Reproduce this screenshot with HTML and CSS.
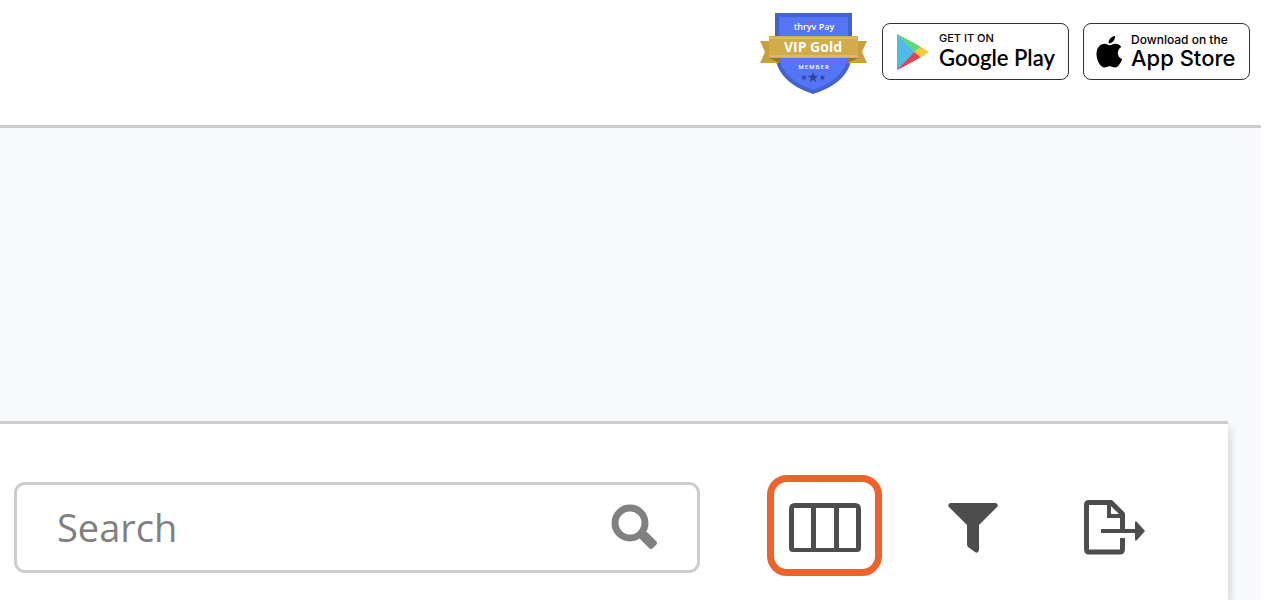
FILE: index.html
```
<!DOCTYPE html>
<html lang="en">
<head>
	<meta charset="utf-8">
	<meta name="viewport" content="width=device-width, initial-scale=1">
	<title>Clients</title>
	<link rel="stylesheet" href="styles.css">
</head>
<body>
	<header class="header">
		<svg class="vip" viewBox="0 0 107 83" role="img" aria-label="thryv Pay VIP Gold Member">
			<path fill="#4663cc" d="M15 1h77v40c0 20-16 34-39 41C31 75 15 61 15 41z"/>
			<path fill="#5475f8" d="M19 5h69v36c0 17-14 30-35 37C33 71 19 58 19 41z"/>
			<path fill="#c8a03c" d="M0 29h20v22H0l5-11zM107 29H87v22h20l-5-11z"/>
			<path fill="#94752a" d="M9 46h11v5zM98 46H87v5z"/>
			<path fill="#d2ab4c" d="M9 24h89v22H9z"/>
			<path stroke="#e5c983" d="M9 26h89M9 44h89"/>
			<path fill="none" stroke="#e0525e" d="M45 12q5-3 9 0"/>
			<text class="vip-brand" x="54" y="18">thryv Pay</text>
			<text class="vip-level" x="53" y="40">VIP Gold</text>
			<text class="vip-member" x="54" y="57">MEMBER</text>
			<path fill="#34439a" d="M53 60l1.400 3.600 3.800.200-3 2.400 1 3.800-3.200-2.100-3.200 2.100 1-3.800-3-2.400 3.800-.2zM44 62.500l.8 2 2.200.1-1.700 1.400.6 2.100-1.900-1.200-1.900 1.200.6-2.100-1.700-1.400 2.200-.1zM62.500 62.500l.8 2 2.200.1-1.700 1.400.6 2.100-1.900-1.200-1.900 1.200.6-2.100-1.700-1.400 2.200-.1z"/>
		</svg>
		<a class="store google" href="#">
			<svg width="33" height="36" viewBox="0 0 33 36" aria-hidden="true">
				<path fill="#4fbce8" d="M1 0v36l18-18z"/>
				<path fill="#5fd87c" d="M1 0l24 13-6 5z"/>
				<path fill="#dc4450" d="M1 36l24-13-6-5z"/>
				<path fill="#5fd87c" d="M1 0l23 12.500-5.500 5.500z"/>
				<path fill="#dc4450" d="M1 36l23-12.500-5.500-5.500z"/>
				<path fill="#fbc93e" d="M24.500 12.500l8.500 5.500-8.500 5.500-6-5.500z"/>
			</svg>
			<span class="store-text">
				<small>GET IT ON</small>
				<strong>Google Play</strong>
			</span>
		</a>
		<a class="store apple" href="#">
			<svg width="27" height="32" viewBox="0 0 27 32" aria-hidden="true">
				<path d="M19 0c.4 4-2.800 7.500-6.400 7.300C12.200 3.600 15.500.4 19 0zM19.300 7.700c2.300 0 4.600 1.200 6 3.200-5.200 3.200-4.300 10.300.9 12.200-1.600 4.400-4.200 8.400-7 8.400-2.100 0-2.900-1.300-5.400-1.300s-3.500 1.300-5.400 1.300C4.500 31.500.5 24.400.5 18 .5 11.500 4.600 7.800 8.500 7.800c2.200 0 4 1.500 5.300 1.500s3.100-1.600 5.500-1.600z"/>
			</svg>
			<span class="store-text">
				<small>Download on the</small>
				<strong>App Store</strong>
			</span>
		</a>
	</header>

	<main class="main">
		<div class="panel">
			<form class="search" role="search">
				<input type="search" placeholder="Search" aria-label="Search">
				<button class="search-btn" type="button" aria-label="Search">
					<svg width="46" height="46" viewBox="0 0 46 46">
						<circle cx="19" cy="19" r="15" fill="none" stroke="#808080" stroke-width="7"/>
						<path fill="#808080" d="M28 33l5-5q2-1 4 1l8 8q2 2 0 4l-3 3q-2 2-4 0l-8-8q-2-2-2-3z"/>
					</svg>
				</button>
			</form>
			<button class="tool active" type="button" aria-label="Columns">
				<svg width="72" height="49" viewBox="0 0 72 49">
					<path fill="#4d4d4d" fill-rule="evenodd" d="M6 0h60q6 0 6 6v39q0 4-4 4H4q-4 0-4-4V6q0-6 6-6zM5 5v40h17V5zM27 5v40h18V5zM50 5v40h17V5z"/>
				</svg>
			</button>
			<button class="tool filter" type="button" aria-label="Filter">
				<svg width="50" height="51" viewBox="0 0 50 51">
					<path fill="#4d4d4d" d="M2 1h46q3 2 1 4L31 23v25q-1 4-4 2l-7-5q-1-1-1-3V23L1 5q-2-2 1-4z"/>
				</svg>
			</button>
			<button class="tool export" type="button" aria-label="Export">
				<svg width="61" height="55" viewBox="0 0 61 55">
					<path fill="none" stroke="#4d4d4d" stroke-width="5" stroke-linejoin="round" d="M38.500 30V14L27 2.500H5q-2.500 0-2.500 2.500v44q0 3 2.500 3h31q2.500 0 2.500-3V38"/>
					<path fill="none" stroke="#4d4d4d" stroke-width="4" d="M25 3v13h13M17 31h35"/>
					<path fill="#4d4d4d" d="M51 23q0-3 2-1l8 9-8 9q-2 2-2-1z"/>
				</svg>
			</button>
		</div>
	</main>
</body>
</html>
```

FILE: styles.css
```
/* base */
* {box-sizing:border-box;}
html,body {height:100%;}
body {margin:0; padding-right:5px; display:flex; flex-direction:column; background:#fff; font-family:"Open Sans",sans-serif;}
button {padding:0; border:0; background:none; cursor:pointer;}
svg {display:block;}

/* header */
.header {display:flex; justify-content:flex-end; align-items:flex-start; gap:14px; height:128px; padding:12px 11px 0 0; border-bottom:3px solid #ccc;}
.vip {width:107px; height:83px; margin-right:1px;}
.vip text {fill:#fff; text-anchor:middle;}
.vip-brand {font:600 9px "Open Sans",sans-serif;}
.vip-level {font:700 14px "Open Sans",sans-serif;}
.vip-member {font:600 6px "Open Sans",sans-serif; letter-spacing:1px;}

/* store links */
.store {display:flex; align-items:center; height:57px; margin-top:11px; border:1px solid #333; border-radius:8px; background:#fff; color:#000; text-decoration:none;}
.store-text {display:flex; flex-direction:column; white-space:nowrap;}
.store strong {font-weight:500;}
.google {width:187px; padding-left:13px; gap:10px; font-family:Lato,sans-serif;}
.google small {font:500 11px/13px Inter,sans-serif;}
.google strong {font-weight:600; font-size:22px; line-height:26px;}
.apple {width:167px; padding-left:12px; gap:8px; font-family:Inter,sans-serif;}
.apple small {font-size:12px; font-weight:500; line-height:13px;}
.apple strong {font-size:22px; line-height:24px;}

/* content */
.main {flex:1; padding:293px 33px 0 0; background:#f8f9fc; overflow:hidden;}
.panel {display:flex; align-items:center; height:100%; padding:30px 83px 0 14px; border-top:3px solid #ccc; background:#fff; box-shadow:3px 7px 8px rgba(0,0,0,.13);}

/* search */
.search {flex:1; display:flex; align-items:center; height:91px; padding:0 40px; border:3px solid #ccc; border-radius:11px;}
.search input {flex:1; min-width:0; padding:0; border:0; outline:0; background:none; font:38px "Open Sans",sans-serif; color:#444;}
.search input::placeholder {color:#808080;}

/* toolbar */
.active {display:flex; align-items:center; justify-content:center; width:115px; height:101px; margin:0 0 4px 67px; padding-top:5px; border:7px solid #ee622c; border-radius:20px;}
.filter {margin-left:66px;}
.export {margin-left:86px;}
```
